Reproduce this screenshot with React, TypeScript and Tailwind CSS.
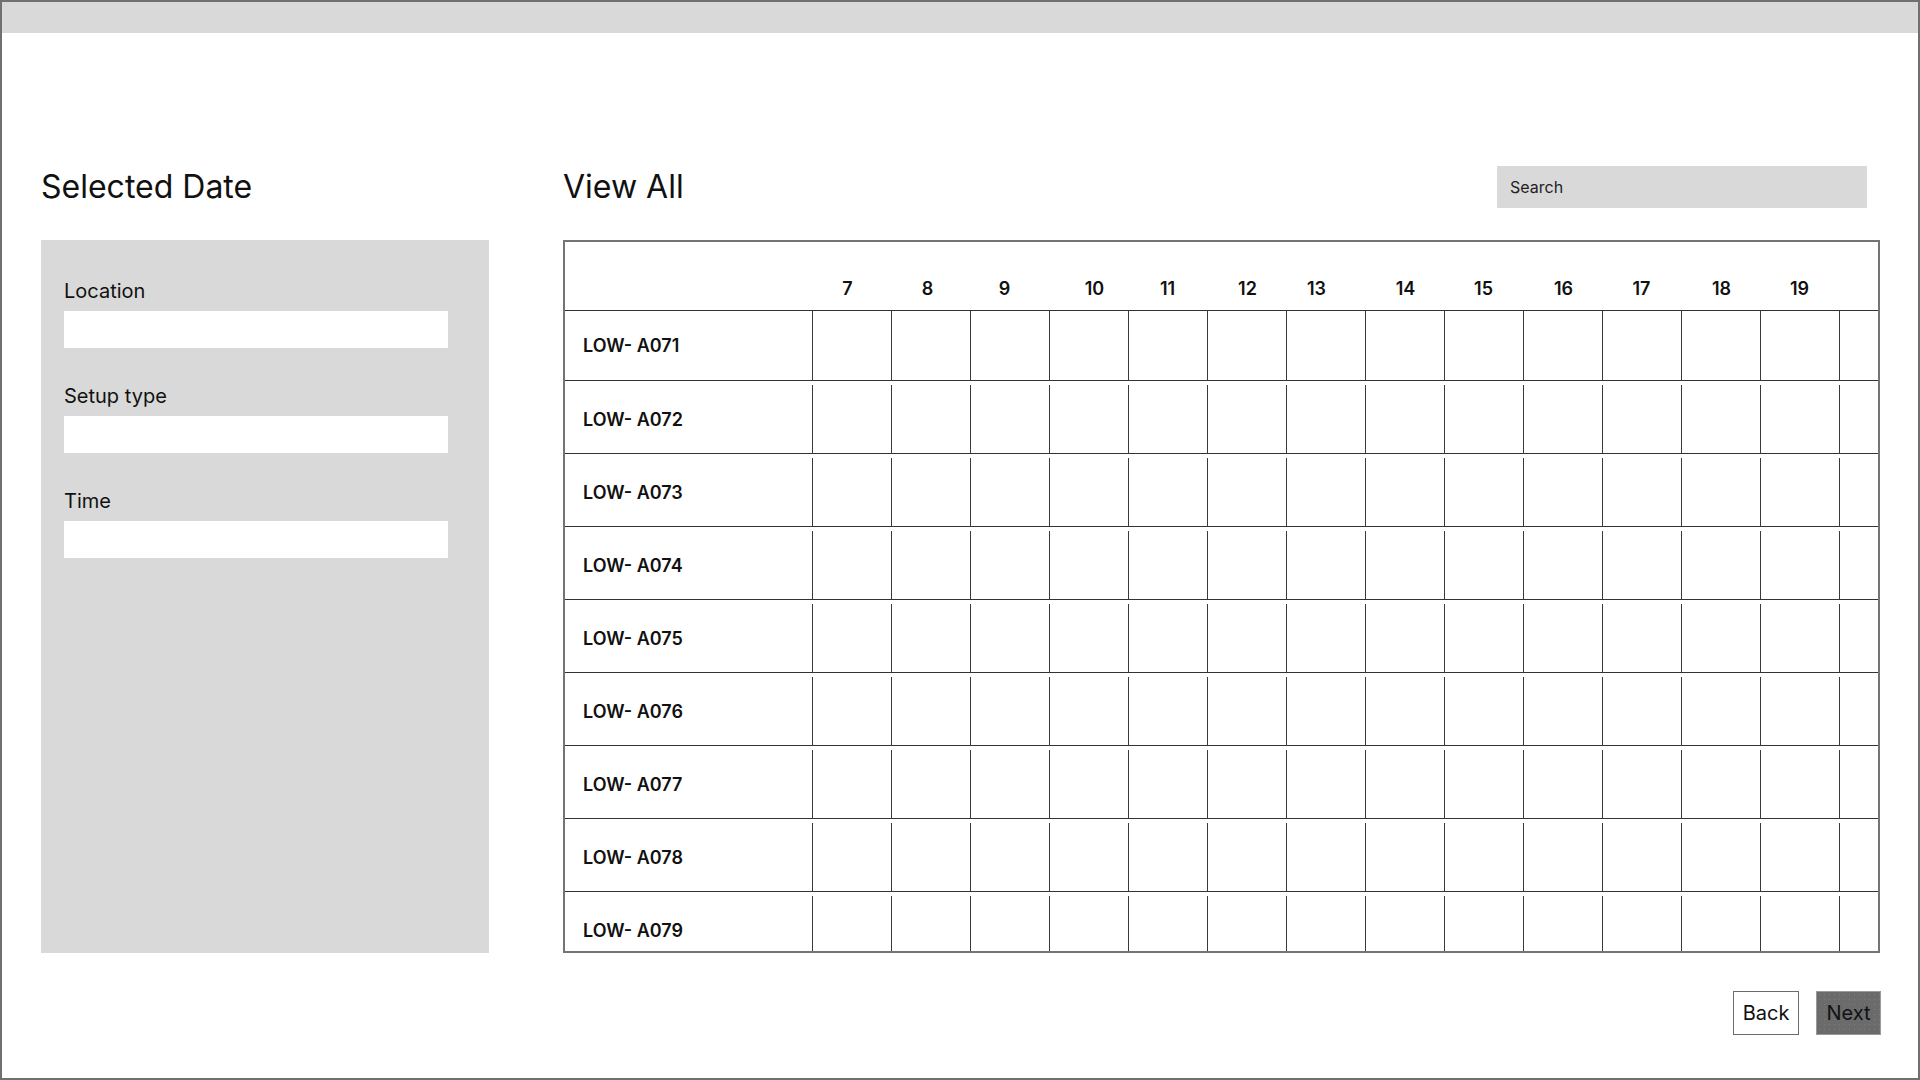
import React from "react";

const hours = [7, 8, 9, 10, 11, 12, 13, 14, 15, 16, 17, 18, 19];
const hourPad = [
  "pr-[10px]",
  "pr-[8px]",
  "pr-[12px]",
  "pl-[10px]",
  "pr-[2px]",
  "",
  "pr-[20px]",
  "",
  "pr-[2px]",
  "",
  "pr-[2px]",
  "",
  "pr-[2px]",
];
const rows = [
  "LOW- A071",
  "LOW- A072",
  "LOW- A073",
  "LOW- A074",
  "LOW- A075",
  "LOW- A076",
  "LOW- A077",
  "LOW- A078",
  "LOW- A079",
];
const fields = ["Location", "Setup type", "Time"];

export default function App() {
  return (
    <div className="w-[1920px] h-[1080px] border-2 border-[#707070] bg-white flex flex-col overflow-hidden [font-family:Inter,sans-serif] text-[#111]">
      <div className="h-[31px] shrink-0 bg-[#d9d9d9]" />
      <div className="flex pl-[39px] pt-[133px] gap-[74px]">
        {/* Left column */}
        <div className="w-[448px] flex flex-col">
          <div className="h-[42px] flex items-center">
            <h1 className="text-[32px] leading-[38px] font-normal">Selected Date</h1>
          </div>
          <div className="mt-[32px] h-[713px] bg-[#d9d9d9] pl-[23px] pt-[39px] flex flex-col">
            {fields.map((f, i) => (
              <div key={f} className={i > 0 ? "mt-[36px] flex flex-col" : "flex flex-col"}>
                <label className="text-[20px] leading-[24px]">{f}</label>
                <div className="mt-[8px] h-[37px] w-[384px] bg-white" />
              </div>
            ))}
          </div>
        </div>

        {/* Right column */}
        <div className="w-[1317px] flex flex-col">
          <div className="h-[42px] flex items-center justify-between">
            <h2 className="text-[32px] leading-[38px] font-normal">View All</h2>
            <div className="mr-[13px] w-[370px] h-[42px] bg-[#d9d9d9] flex items-center pl-[13px] text-[16px] text-[#222]">
              Search
            </div>
          </div>

          <div className="mt-[32px] h-[713px] border-2 border-[#747474] overflow-hidden flex flex-col">
            <div className="h-[69px] shrink-0 border-b border-[#333] grid grid-cols-[248px_repeat(13,79px)_1fr] items-end pb-[11px]">
              <div />
              {hours.map((h, i) => (
                <div key={h} className={"text-center text-[18px] leading-[21px] font-semibold " + hourPad[i]}>
                  {h}
                </div>
              ))}
              <div />
            </div>
            {rows.map((r, i) => (
              <div
                key={r}
                className={
                  i === 0
                    ? "h-[70px] shrink-0 border-b border-[#333] grid grid-cols-[248px_repeat(13,79px)_1fr]"
                    : "h-[73px] shrink-0 border-b border-[#333] pt-[4px] grid grid-cols-[248px_repeat(13,79px)_1fr]"
                }
              >
                <div className="border-r border-[#3a3a3a] flex items-center pl-[18px] text-[18px] leading-[21px] font-semibold">
                  {r}
                </div>
                {hours.map((h) => (
                  <div key={h} className="border-r border-[#3a3a3a]" />
                ))}
                <div />
              </div>
            ))}
          </div>

          <div className="mt-[38px] flex justify-end gap-[17px]">
            <button className="w-[66px] h-[44px] border border-[#6b6b6b] bg-white text-[20px] text-[#111] flex items-center justify-center">
              Back
            </button>
            <button className="w-[65px] h-[44px] -mr-[1px] border border-[#9a9a9a] bg-[#6b6b6b] bg-[image:radial-gradient(circle,#7c7c7c_0.6px,transparent_0.8px)] bg-[length:5px_5px] text-[20px] text-[#111] flex items-center justify-center">
              Next
            </button>
          </div>
        </div>
      </div>
    </div>
  );
}
